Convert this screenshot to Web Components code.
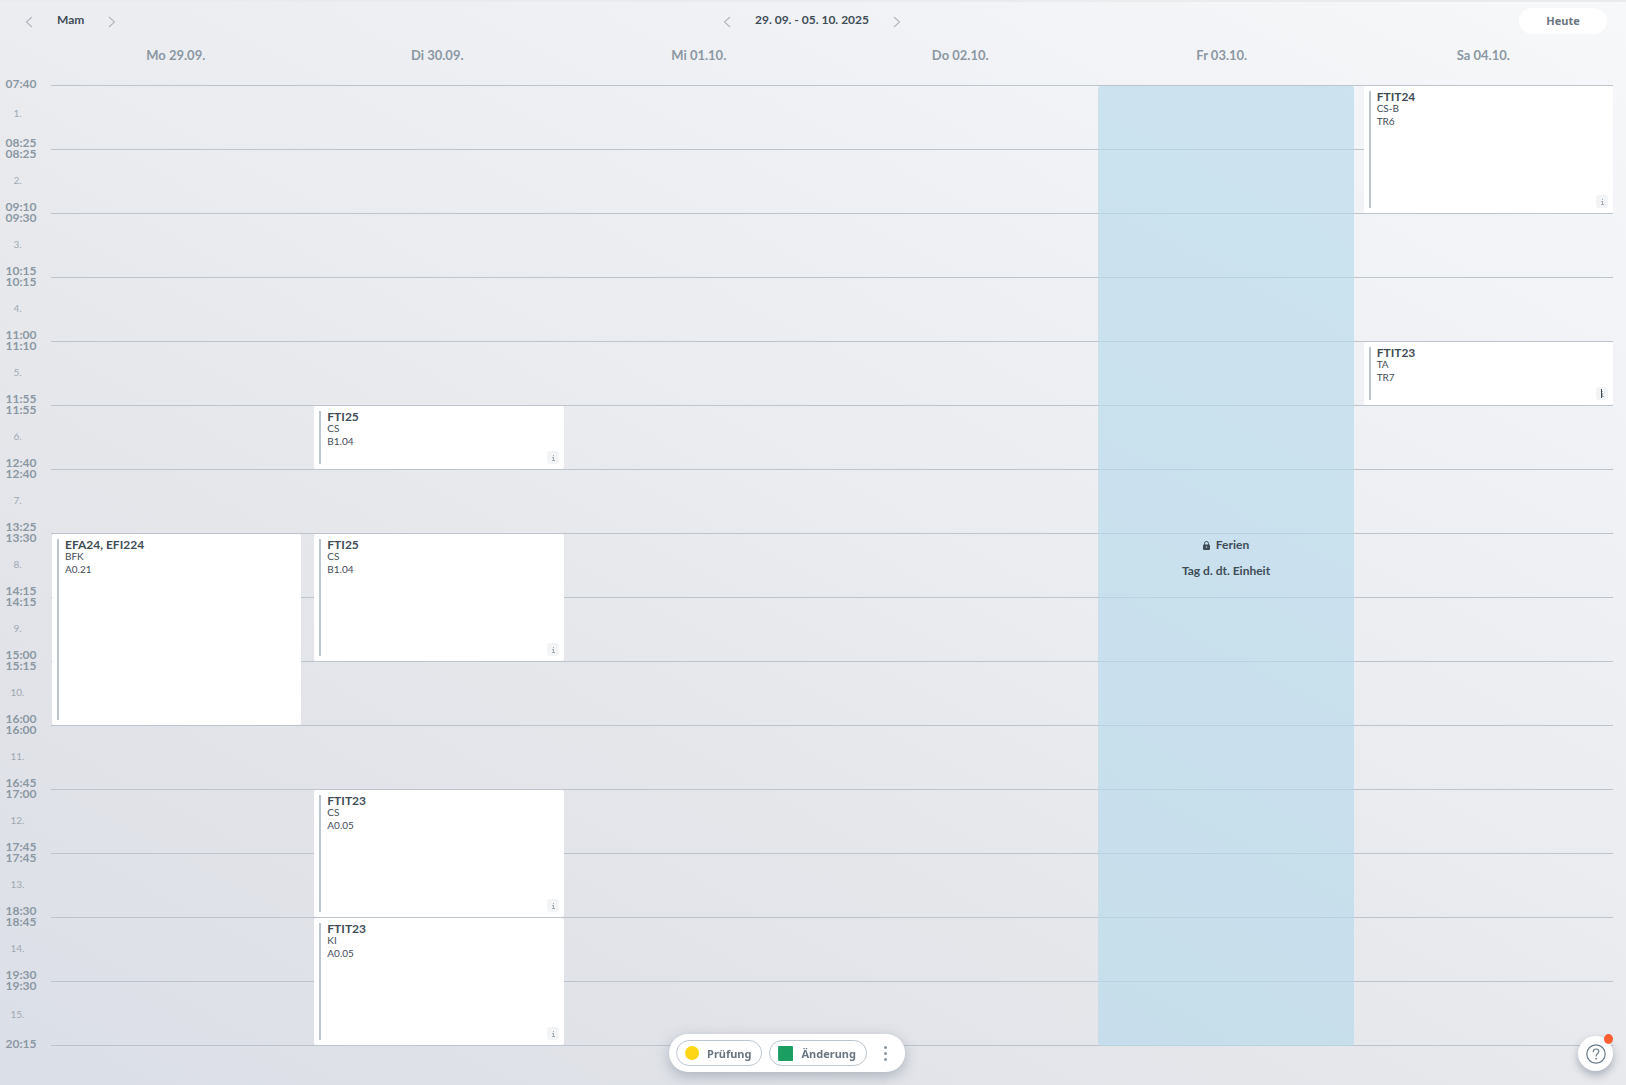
<!DOCTYPE html>
<html lang="de">
<head>
<meta charset="utf-8">
<title>Stundenplan</title>
<style>
    body {
        margin: 0;
        min-height: 100vh;
        font-family: Lato, 'Liberation Sans', sans-serif;
        font-size: 12px;
        color: #3f4d57;
        background: linear-gradient(28deg, #dbdfe8 0%, #e1e3e8 22%, #e8e9ed 44%, #ecedf1 57%, #f1f2f5 78%, #f7f8fa 100%);
    }
</style>
</head>
<body>
<time-table></time-table>

<script>
const lessons = [
    { day: 1, from: 8, rows: 3, group: 'EFA24, EFI224', subject: 'BFK', room: 'A0.21' },
    { day: 2, from: 6, rows: 1, group: 'FTI25', subject: 'CS', room: 'B1.04', info: 'plain' },
    { day: 2, from: 8, rows: 2, group: 'FTI25', subject: 'CS', room: 'B1.04', info: 'plain' },
    { day: 2, from: 12, rows: 2, group: 'FTIT23', subject: 'CS', room: 'A0.05', info: 'plain' },
    { day: 2, from: 14, rows: 2, group: 'FTIT23', subject: 'KI', room: 'A0.05', info: 'plain' },
    { day: 6, from: 1, rows: 2, group: 'FTIT24', subject: 'CS-B', room: 'TR6', info: 'plain' },
    { day: 6, from: 5, rows: 1, group: 'FTIT23', subject: 'TA', room: 'TR7', info: 'marked' },
];

const hours = [
    ['07:40', '08:25'], ['08:25', '09:10'], ['09:30', '10:15'], ['10:15', '11:00'],
    ['11:10', '11:55'], ['11:55', '12:40'], ['12:40', '13:25'], ['13:30', '14:15'],
    ['14:15', '15:00'], ['15:15', '16:00'], ['16:00', '16:45'], ['17:00', '17:45'],
    ['17:45', '18:30'], ['18:45', '19:30'], ['19:30', '20:15'],
];

const days = ['Mo 29.09.', 'Di 30.09.', 'Mi 01.10.', 'Do 02.10.', 'Fr 03.10.', 'Sa 04.10.'];

// previous / next switch around a slotted title
class PageSwitch extends HTMLElement {
    constructor() {
        super();
        this.attachShadow({ mode: 'open' });
        this.shadowRoot.innerHTML = `
<style>
    :host {
        display: flex;
        align-items: center;
        font-weight: bold;
        line-height: 16px;
    }
    button {
        display: flex;
        justify-content: center;
        width: 16px;
        padding: 4px 0 2px;
        border: 0;
        background: none;
        cursor: pointer;
    }
    svg { display: block; }
    path { fill: none; stroke: #b4bac0; stroke-width: 1.2; }
    span {
        padding: 0 20px 2px;
        white-space: nowrap;
    }
</style>
<button aria-label="Zurück"><svg width="8" height="12" viewBox="0 0 8 12"><path d="M7 1L1.500 6l5.500 5"/></svg></button>
<span><slot></slot></span>
<button aria-label="Weiter"><svg width="8" height="12" viewBox="0 0 8 12"><path d="M1 1l5.500 5L1 11"/></svg></button>
`;
    }
}
customElements.define('page-switch', PageSwitch);

class TopBar extends HTMLElement {
    constructor() {
        super();
        this.attachShadow({ mode: 'open' });
        this.shadowRoot.innerHTML = `
<style>
    :host {
        display: grid;
        grid-template-columns: 1fr auto 1fr;
        align-items: center;
        height: 38px;
        padding: 0 19px 0 21px;
        border-top: 2px solid #e9ecec;
    }
    .week { margin-right: 4px; }
    .today {
        justify-self: end;
        width: 88px;
        height: 26px;
        margin-bottom: 1px;
        padding: 0;
        border: 0;
        border-radius: 13px;
        background: #fff;
        color: #6a7680;
        font: bold 11px 'Noto Sans', sans-serif;
        cursor: pointer;
    }
</style>
<page-switch>Mam</page-switch>
<page-switch class="week">29. 09. - 05. 10. 2025</page-switch>
<button class="today">Heute</button>
`;
    }
}
customElements.define('top-bar', TopBar);

class HourLabel extends HTMLElement {
    constructor() {
        super();
        this.attachShadow({ mode: 'open' });
        this.shadowRoot.innerHTML = `
<style>
    :host {
        display: flex;
        flex-direction: column;
        justify-content: space-between;
        align-items: center;
        font-weight: bold;
        line-height: 11px;
        color: #8b98a3;
    }
    .number {
        padding-right: 7px;
        font-size: 10px;
        font-weight: normal;
        color: #9fa9b2;
    }
</style>
<time><slot name="start"></slot></time>
<span class="number"><slot name="number"></slot></span>
<time><slot name="end"></slot></time>
`;
    }
}
customElements.define('hour-label', HourLabel);

class LessonCard extends HTMLElement {
    constructor() {
        super();
        this.attachShadow({ mode: 'open' });
        this.shadowRoot.innerHTML = `
<style>
    :host {
        display: flex;
        gap: 6px;
        position: relative;
        margin-bottom: 1px;
        padding: 5px;
        border-radius: 2px;
        background: #fff;
        box-sizing: border-box;
    }
    .bar {
        width: 2px;
        background: #bcc6cf;
    }
    h3, p {
        margin: 0;
        font-size: 10px;
        font-weight: normal;
        line-height: 13px;
    }
    h3 {
        font-size: 12px;
        font-weight: bold;
        line-height: 11px;
    }
    .info {
        display: none;
        position: absolute;
        right: 5px;
        bottom: 5px;
        width: 12px;
        height: 13px;
        border-radius: 3px;
        background: #f3f4f6;
    }
    :host([info]) .info { display: block; }
    .cursor { display: none; }
    :host([info="marked"]) .cursor { display: block; }
</style>
<div class="bar"></div>
<div>
    <h3><slot name="group"></slot></h3>
    <p><slot name="subject"></slot></p>
    <p><slot name="room"></slot></p>
</div>
<svg class="info" viewBox="0 0 12 13" shape-rendering="crispEdges">
    <path fill="#a4adb6" d="M6 4h1v1H6zM5 6h2v3H6V7H5zM5 9h3v1H5z"/>
    <path class="cursor" fill="#3f4d57" d="M5 2h1v9H5z"/>
</svg>
`;
    }
}
customElements.define('lesson-card', LessonCard);

class DayOff extends HTMLElement {
    constructor() {
        super();
        this.attachShadow({ mode: 'open' });
        this.shadowRoot.innerHTML = `
<style>
    :host {
        display: flex;
        flex-direction: column;
        align-items: center;
        justify-content: center;
        gap: 10px;
        margin: 0 -3px;
        padding-bottom: 16px;
        border-radius: 3px;
        background: rgba(183, 217, 235, 0.65);
        font-weight: bold;
        line-height: 16px;
        box-sizing: border-box;
    }
    div {
        display: flex;
        align-items: center;
        gap: 6px;
    }
</style>
<div>
    <svg width="7" height="9" viewBox="0 0 7 9">
        <path fill="none" stroke="#3f4d57" d="M1.500 4V2.500a2 2 0 0 1 4 0V4"/>
        <path fill="#3f4d57" d="M1 3.500h5a1 1 0 0 1 1 1V8a1 1 0 0 1-1 1H1a1 1 0 0 1-1-1V4.500a1 1 0 0 1 1-1z"/>
        <circle cx="3.500" cy="6" r="0.700" fill="#cbe0ed"/>
    </svg>
    <slot name="kind"></slot>
</div>
<slot></slot>
`;
    }
}
customElements.define('day-off', DayOff);

class LegendBar extends HTMLElement {
    constructor() {
        super();
        this.attachShadow({ mode: 'open' });
        this.shadowRoot.innerHTML = `
<style>
    :host {
        display: flex;
        align-items: center;
        gap: 7px;
        height: 38px;
        padding: 0 7px;
        border-radius: 19px;
        background: #fff;
        box-shadow: 0 4px 14px rgba(70, 85, 105, 0.35);
        box-sizing: border-box;
    }
    button {
        display: flex;
        align-items: center;
        gap: 8px;
        height: 26px;
        padding: 0 10px 0 8px;
        border: 1px solid #bcc6cf;
        border-radius: 13px;
        background: #fff;
        color: #6a7680;
        font: bold 11px 'Noto Sans', sans-serif;
        cursor: pointer;
    }
    .more {
        justify-content: center;
        width: 24px;
        padding: 0;
        border: 0;
    }
</style>
<button><svg width="14" height="14"><circle cx="7" cy="7" r="7" fill="#ffd616"/></svg>Prüfung</button>
<button><svg width="15" height="15"><rect width="15" height="15" rx="1" fill="#1b9e61"/></svg>Änderung</button>
<button class="more" aria-label="Mehr">
    <svg width="3" height="15" fill="#8b98a3"><circle cx="1.500" cy="1.500" r="1.500"/><circle cx="1.500" cy="7.500" r="1.500"/><circle cx="1.500" cy="13.500" r="1.500"/></svg>
</button>
`;
    }
}
customElements.define('legend-bar', LegendBar);

class HelpButton extends HTMLElement {
    constructor() {
        super();
        this.attachShadow({ mode: 'open' });
        this.shadowRoot.innerHTML = `
<style>
    :host { display: block; }
    button {
        display: flex;
        align-items: center;
        justify-content: center;
        width: 35px;
        height: 35px;
        padding: 0;
        border: 0;
        border-radius: 50%;
        background: #fff;
        box-shadow: 0 4px 9px rgba(70, 85, 105, 0.4);
        cursor: pointer;
    }
    .badge {
        position: absolute;
        top: -2px;
        right: 0;
        width: 9px;
        height: 10px;
        border-radius: 50%;
        background: #ff5f33;
    }
</style>
<button aria-label="Hilfe">
    <svg width="20" height="20" viewBox="0 0 20 20" fill="none" stroke="#6a7b88" stroke-linecap="round">
        <circle cx="10" cy="10" r="9.200" stroke-width="1.200"/>
        <path stroke-width="1.200" d="M7.300 7.700C7.300 5.900 8.500 5 10 5s2.800 1 2.800 2.600c0 2.100-2.700 2.100-2.700 4.400"/>
        <circle cx="10.100" cy="14.700" r="0.500" fill="#6a7b88"/>
    </svg>
</button>
<span class="badge"></span>
`;
    }
}
customElements.define('help-button', HelpButton);

class TimeTable extends HTMLElement {
    constructor() {
        super();
        this.attachShadow({ mode: 'open' });
        this.shadowRoot.innerHTML = `
<style>
    :host {
        display: block;
        padding-bottom: 32px;
    }
    .days {
        display: grid;
        grid-template-columns: repeat(6, 1fr);
        padding: 7px 12px 15px 45px;
        font-size: 13px;
        font-weight: bold;
        line-height: 16px;
        text-align: center;
        color: #8b98a3;
    }
    .plan {
        display: grid;
        grid-template-columns: 42px 1fr;
        gap: 9px;
        padding-right: 13px;
    }
    .hours {
        display: grid;
        grid-template-rows: 70px repeat(13, 64px) 69px;
    }
    .lines, .lessons {
        display: grid;
        grid-area: 1 / 2;
        grid-template-rows: repeat(15, 64px);
        align-content: start;
        margin-top: 8px;
    }
    .lines {
        margin-top: 7px;
        border-top: 1px solid #bcc5cd;
    }
    .line { border-bottom: 1px solid #bcc5cd; }
    .lessons {
        grid-template-columns: repeat(6, 1fr);
        column-gap: 13px;
        padding-left: 1px;
    }
    day-off { grid-area: 1 / 5 / 16 / 6; }
    legend-bar {
        position: fixed;
        left: calc(50% - 26px);
        bottom: 13px;
        transform: translateX(-50%);
    }
    help-button {
        position: fixed;
        right: 13px;
        bottom: 14px;
    }
</style>
<top-bar></top-bar>
<div class="days">${days.map(day => `<div>${day}</div>`).join('')}</div>
<div class="plan">
    <div class="hours">
        ${hours.map(([start, end], i) => `
        <hour-label>
            <span slot="start">${start}</span>
            <span slot="number">${i + 1}.</span>
            <span slot="end">${end}</span>
        </hour-label>`).join('')}
    </div>
    <div class="lines">${hours.map(() => '<div class="line"></div>').join('')}</div>
    <div class="lessons">
        <day-off><span slot="kind">Ferien</span>Tag d. dt. Einheit</day-off>
        ${lessons.map(l => `
        <lesson-card style="grid-area: ${l.from} / ${l.day} / span ${l.rows}" ${l.info ? `info="${l.info}"` : ''}>
            <span slot="group">${l.group}</span>
            <span slot="subject">${l.subject}</span>
            <span slot="room">${l.room}</span>
        </lesson-card>`).join('')}
    </div>
</div>
<legend-bar></legend-bar>
<help-button></help-button>
`;
    }
}
customElements.define('time-table', TimeTable);
</script>
</body>
</html>
